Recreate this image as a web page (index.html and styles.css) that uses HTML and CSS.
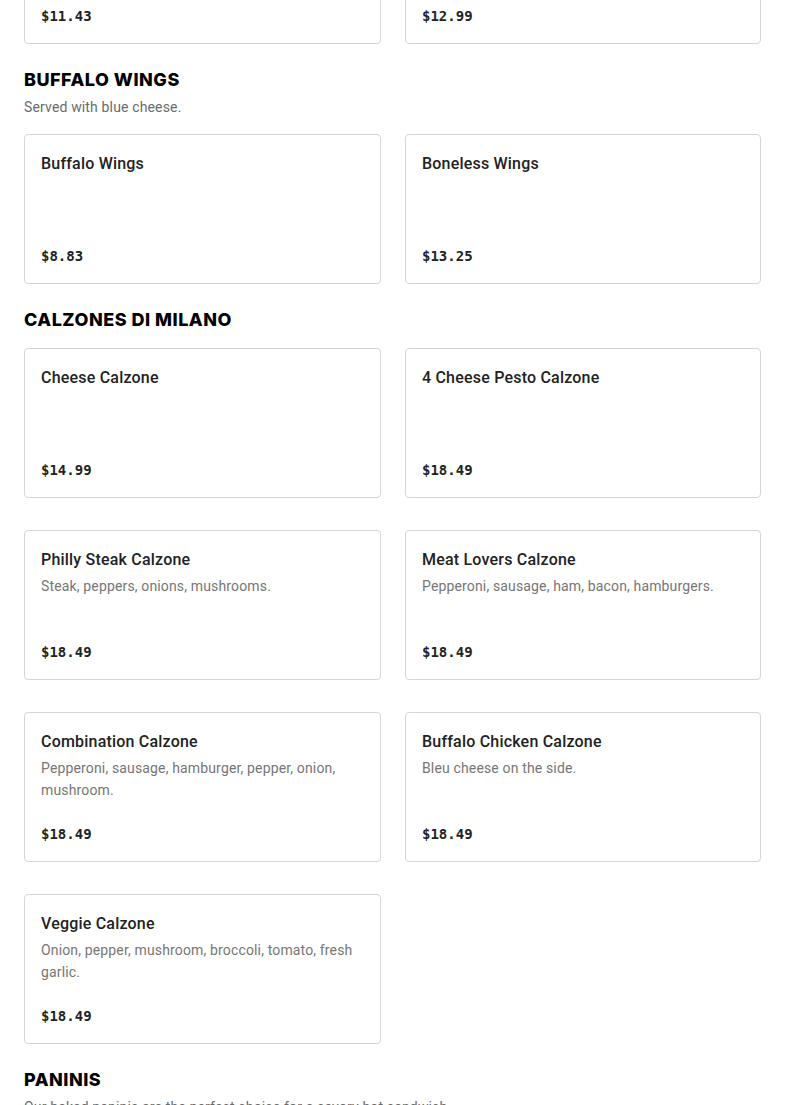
FILE: index.html
```html
<!DOCTYPE html>
<html lang="en">
<head>
<meta charset="utf-8">
<title>Menu</title>
<link rel="stylesheet" href="styles.css">
</head>
<body>
<main class="menu">
  <section class="section section-first">
    <div class="grid">
      <div class="card"><h3 class="item-title">Garlic Knots</h3><p class="price">$11.43</p></div>
      <div class="card"><h3 class="item-title">Mozzarella Sticks</h3><p class="price">$12.99</p></div>
    </div>
  </section>

  <section class="section">
    <header class="section-head">
      <h2 class="section-title">BUFFALO WINGS</h2>
      <p class="section-desc">Served with blue cheese.</p>
    </header>
    <div class="grid">
      <div class="card"><h3 class="item-title">Buffalo Wings</h3><p class="price">$8.83</p></div>
      <div class="card"><h3 class="item-title">Boneless Wings</h3><p class="price">$13.25</p></div>
    </div>
  </section>

  <section class="section">
    <header class="section-head">
      <h2 class="section-title">CALZONES DI MILANO</h2>
    </header>
    <div class="grid">
      <div class="card"><h3 class="item-title">Cheese Calzone</h3><p class="price">$14.99</p></div>
      <div class="card"><h3 class="item-title">4 Cheese Pesto Calzone</h3><p class="price">$18.49</p></div>
      <div class="card"><h3 class="item-title">Philly Steak Calzone</h3><p class="item-desc">Steak, peppers, onions, mushrooms.</p><p class="price">$18.49</p></div>
      <div class="card"><h3 class="item-title">Meat Lovers Calzone</h3><p class="item-desc">Pepperoni, sausage, ham, bacon, hamburgers.</p><p class="price">$18.49</p></div>
      <div class="card"><h3 class="item-title">Combination Calzone</h3><p class="item-desc">Pepperoni, sausage, hamburger, pepper, onion, mushroom.</p><p class="price">$18.49</p></div>
      <div class="card"><h3 class="item-title">Buffalo Chicken Calzone</h3><p class="item-desc">Bleu cheese on the side.</p><p class="price">$18.49</p></div>
      <div class="card"><h3 class="item-title">Veggie Calzone</h3><p class="item-desc">Onion, pepper, mushroom, broccoli, tomato, fresh garlic.</p><p class="price">$18.49</p></div>
    </div>
  </section>

  <section class="section">
    <header class="section-head">
      <h2 class="section-title">PANINIS</h2>
      <p class="section-desc">Our baked paninis are the perfect choice for a savory hot sandwich.</p>
    </header>
  </section>
</main>
</body>
</html>
```

FILE: styles.css
```css
* { box-sizing: border-box; }

html, body {
  margin: 0;
  padding: 0;
  background: #ffffff;
}

body {
  font-family: "Roboto", "Liberation Sans", Arial, sans-serif;
  color: #222222;
  overflow: hidden;
}

.menu {
  padding: 0 24px;
  margin-top: -106px;
}

.section {
  display: flex;
  flex-direction: column;
  margin-bottom: 24px;
}

.section-head {
  display: flex;
  flex-direction: column;
  gap: 4px;
  margin-bottom: 16px;
}

.section-title {
  margin: 0;
  font-family: "Inter", "Liberation Sans", Arial, sans-serif;
  font-size: 18px;
  line-height: 24px;
  font-weight: 800;
  color: #000;
  letter-spacing: 0.5px;
}

.section-desc {
  margin: 0;
  font-size: 14px;
  line-height: 22px;
  letter-spacing: 0.15px;
  color: #6b6b6b;
}

.grid {
  display: grid;
  grid-template-columns: 357px 356px;
  column-gap: 24px;
  row-gap: 32px;
}

.card {
  display: flex;
  flex-direction: column;
  min-height: 150px;
  padding: 17px 16px 17px;
  border: 1px solid #d6d6d6;
  border-radius: 4px;
  background: #fff;
}

.item-title {
  margin: 0;
  font-size: 16px;
  line-height: 24px;
  font-weight: 500;
  letter-spacing: 0.2px;
  color: #222222;
}

.item-desc {
  margin: 3px 0 23px;
  font-size: 14px;
  line-height: 22px;
  letter-spacing: 0.15px;
  color: #767676;
}

.price {
  margin: auto 0 0;
  font-family: "DejaVu Sans Mono", "Liberation Mono", monospace;
  font-size: 14px;
  line-height: 20px;
  font-weight: 600;
  color: #222222;
}
```
